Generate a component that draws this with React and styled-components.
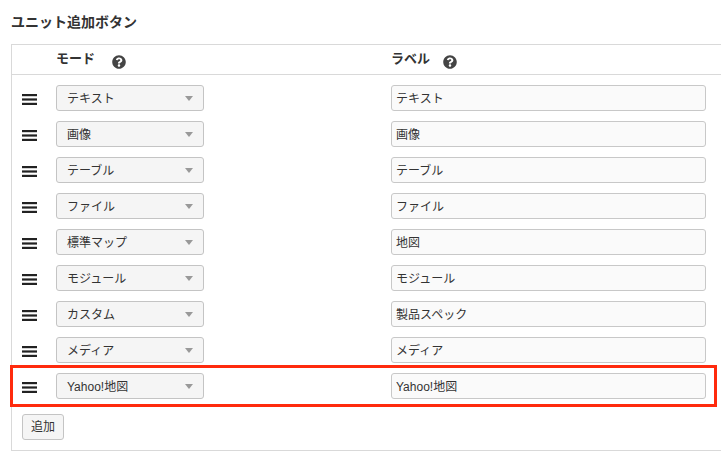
import React from "react";
import styled, { createGlobalStyle } from "styled-components";
import { FaQuestionCircle } from "react-icons/fa";

const Global = createGlobalStyle`
  html, body { margin: 0; padding: 0; background: #fff; overflow: hidden; }
  body { font-family: "Liberation Sans", "Noto Sans CJK JP", sans-serif; color: #333; }
`;

const Page = styled.div`
  position: relative;
  width: 721px;
  height: 468px;
  overflow: hidden;
  padding: 14px 0 0 11px;
  box-sizing: border-box;
`;

const Title = styled.h2`
  margin: 0 0 13px;
  height: 17px;
  font-size: 14px;
  line-height: 17px;
  font-weight: 700;
  color: #333;
`;

const Panel = styled.div`
  width: 730px;
  height: 407px;
  box-sizing: border-box;
  border: 1px solid #d9d9d9;
`;

const Columns = styled.div`
  display: grid;
  grid-template-columns: 44px 335px 315px;
  align-items: center;
`;

const Header = styled(Columns)`
  height: 30px;
  box-sizing: border-box;
  border-bottom: 1px solid #d9d9d9;
`;

const HeaderCell = styled.div`
  grid-column: ${(p) => p.$col};
  display: flex;
  align-items: center;
  gap: ${(p) => p.$gap}px;
  height: 29px;
  font-size: 13px;
  font-weight: 700;
  color: #333;
  & > span { position: relative; top: -2px; }
  & > svg { position: relative; top: 2px; }
`;

const Rows = styled.div`
  display: flex;
  flex-direction: column;
  gap: 10px;
  padding-top: 10px;
`;

const Row = styled(Columns)`
  height: 26px;
`;

const Handle = styled.svg`
  display: block;
  margin: 3px 0 0 10px;
  width: 15px;
  height: 11px;
`;

const Select = styled.div`
  box-sizing: border-box;
  width: 148px;
  height: 26px;
  display: flex;
  align-items: center;
  justify-content: space-between;
  padding: 0 10px 2px 10px;
  background: #f5f5f5;
  border: 1px solid #c4c4c4;
  border-radius: 3px;
  font-size: 12px;
  color: #333;
`;

const Caret = styled.span`
  width: 0;
  height: 0;
  margin-top: 2px;
  border-left: 4px solid transparent;
  border-right: 4px solid transparent;
  border-top: 5px solid #999;
`;

const LabelInput = styled.input`
  box-sizing: border-box;
  width: 315px;
  height: 26px;
  padding: 0 4px 2px;
  background: #fafafa;
  border: 1px solid #c8c8c8;
  border-radius: 3px;
  font: 12px "Liberation Sans", "Noto Sans CJK JP", sans-serif;
  color: #333;
  outline: none;
`;

const AddButton = styled.button`
  display: block;
  box-sizing: border-box;
  margin: 15px 0 0 10px;
  width: 42px;
  height: 26px;
  padding: 0 0 3px;
  background: #f5f5f5;
  border: 1px solid #c4c4c4;
  border-radius: 3px;
  font: 12px "Liberation Sans", "Noto Sans CJK JP", sans-serif;
  color: #333;
`;

const Highlight = styled.div`
  position: absolute;
  left: 10px;
  top: 365px;
  width: 707px;
  height: 42px;
  box-sizing: border-box;
  border: 3px solid #ff2a0d;
  pointer-events: none;
`;

const rows = [
  ["テキスト", "テキスト"],
  ["画像", "画像"],
  ["テーブル", "テーブル"],
  ["ファイル", "ファイル"],
  ["標準マップ", "地図"],
  ["モジュール", "モジュール"],
  ["カスタム", "製品スペック"],
  ["メディア", "メディア"],
  ["Yahoo!地図", "Yahoo!地図"],
];

export default function App() {
  return (
    <Page>
      <Global />
      <Title>ユニット追加ボタン</Title>
      <Panel>
        <Header>
          <HeaderCell $col={2} $gap={17}>
            <span>モード</span>
            <FaQuestionCircle size={14} color="#444" />
          </HeaderCell>
          <HeaderCell $col={3} $gap={13}>
            <span>ラベル</span>
            <FaQuestionCircle size={14} color="#444" />
          </HeaderCell>
        </Header>
        <Rows>
          {rows.map(([mode, label], i) => (
            <Row key={i}>
              <Handle viewBox="0 0 15 11" aria-hidden="true">
                <rect x="0" y="0" width="15" height="2.2" fill="#222" />
                <rect x="0" y="4.4" width="15" height="2.2" fill="#222" />
                <rect x="0" y="8.8" width="15" height="2.2" fill="#222" />
              </Handle>
              <Select>
                <span>{mode}</span>
                <Caret />
              </Select>
              <LabelInput defaultValue={label} />
            </Row>
          ))}
        </Rows>
        <AddButton>追加</AddButton>
      </Panel>
      <Highlight />
    </Page>
  );
}
